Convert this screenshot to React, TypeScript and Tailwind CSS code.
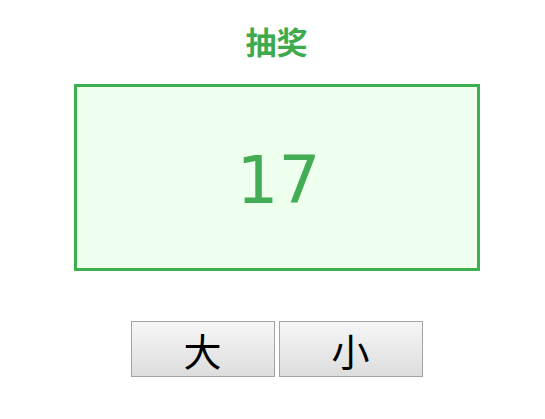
export default function App() {
  return (
    <div className="flex min-h-[419px] w-full flex-col items-center bg-white pl-[8px] font-['DejaVu_Sans','Noto_Sans_CJK_SC',sans-serif]">
      <h1 className="mt-[24px] text-[31px] font-bold leading-[38px] text-[#3daa4d]">抽奖</h1>
      <div className="mt-[22px] flex h-[187px] w-[406px] items-center justify-center border-[3px] border-[#3daf4f] bg-[#efffee] pl-[4px] pt-[6px]">
        <span className="text-[66px] leading-none text-[#43ad55]">17</span>
      </div>
      <div className="mt-[50px] flex gap-[4px]">
        {['大', '小'].map((label) => (
          <button
            className="flex h-[56px] w-[144px] items-center justify-center border border-[#a3a3a3] bg-gradient-to-b from-[#f6f6f6] to-[#dddddd] text-[38px] text-black font-['Noto_Sans_CJK_SC',sans-serif]"
            key={label}
            type="button"
          >
            {label}
          </button>
        ))}
      </div>
    </div>
  )
}
